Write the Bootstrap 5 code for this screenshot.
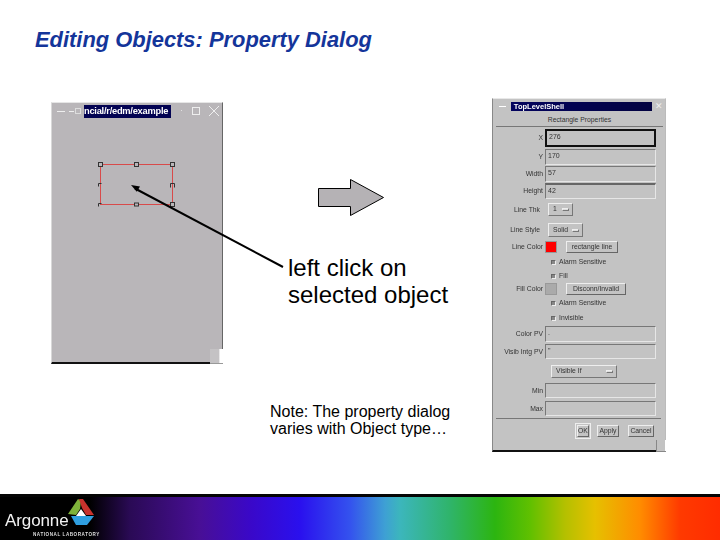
<!DOCTYPE html>
<html lang="en"><head><meta charset="utf-8"><title>Editing Objects</title>
<link href="https://cdn.jsdelivr.net/npm/bootstrap@5.3.0/dist/css/bootstrap.min.css" rel="stylesheet">
<style>
html,body{margin:0;background:#fff;overflow:hidden}
.slide-canvas{position:relative;width:720px;height:540px;font-family:"Liberation Sans",Arial,sans-serif;color:#000;overflow:hidden}
.slide-title{position:absolute;left:35px;top:27px;margin:0;font:italic bold 21.9px/25px "Liberation Sans",sans-serif;color:#14359a;white-space:nowrap}
.callout{position:absolute;left:288px;top:254px;font-size:24px;line-height:27px;white-space:nowrap}
.note-text{position:absolute;left:270px;top:403px;font-size:16px;line-height:17px;white-space:nowrap}
.shot-win{position:absolute;left:51px;top:102px;width:172px;height:262px;background:#b9b6b9;border-top:1px solid #e6e6e6;border-left:1px solid #d8d8d8;border-right:1px solid #666;border-bottom:2px solid #111;filter:blur(.2px)}
.shot-corner{position:absolute;right:-1px;bottom:-2px;width:13px;height:15px;background:linear-gradient(90deg,#c4c2c4 0,#c4c2c4 70%,#fff 75%);border-bottom:1px solid #999}
.shot-bar{height:16px;display:flex;align-items:center;padding-left:5px;color:#e8e8e8;font-size:9px}
.shot-dash{width:8px;border-top:1px solid #eee;margin-right:4px}
.shot-pin{width:6px;height:6px;border:1px solid #ddd;margin-right:3px}
.shot-name{background:#020252;color:#fff;font-size:9.3px;font-weight:bold;line-height:13px;flex:0 0 87px;white-space:nowrap;letter-spacing:-.25px}
.shot-btns{margin-left:auto;display:flex;align-items:center;gap:9px;padding-right:3px}
.shot-sq{width:8px;height:8px;border:1px solid #eee}
.overlay-svg{position:absolute;left:0;top:0;pointer-events:none}
.dlg{position:absolute;left:492px;top:98px;width:174px;height:354px;background:#c3c3c3;border:1px solid #e8e8e8;border-left-color:#888;border-right:1px solid #bbb;border-bottom:2px solid #111;font-size:6.8px;color:#333;display:flex;flex-direction:column;padding:2px 2px 0 3px}
.dlg *{font-family:"Liberation Sans",sans-serif}
.dlg-corner{position:absolute;right:-1px;bottom:-2px;width:10px;height:12px;background:linear-gradient(90deg,#c3c3c3 0,#c3c3c3 85%,#fff 90%);border-bottom:1px solid #888;border-left:1px solid #888}
.dlg-bar{height:10px;display:flex;align-items:center;gap:3px;flex:none}
.dlg-dash{width:7px;border-top:1px solid #fff;margin:0 2px 0 3px}
.dlg-name{width:144px;background:linear-gradient(90deg,#03035e,#020240);color:#fff;font-size:7.5px;line-height:9px;font-weight:bold;padding-left:3px;filter:blur(.3px)}
.dlg-x{color:#eee;font-size:9px;line-height:9px}
.dlg-head{height:14px;margin-top:2px;text-align:center;line-height:14px;border-bottom:1px solid #777;flex:none;font-size:6.8px}
.dlg-row{display:flex;align-items:center;flex:none;filter:blur(.4px)}
.dlg-lab{width:49px;text-align:right;padding-right:2px;white-space:nowrap;flex:none;line-height:8px}
.dlg-in{width:111px;height:100%;border:1px solid;border-color:#777 #e6e6e6 #e6e6e6 #777;padding:0 2px;line-height:11px;font-size:7px;display:block}
.dlg-in-focus{border:2px solid #111}
.dlg-in-top{border-top:2px solid #666}
.dlg-drop{display:flex;align-items:center;justify-content:space-between;height:100%;border:1px solid;border-color:#eee #777 #777 #eee;padding:0 3px 0 4px;margin-left:3px}
.dlg-knob{width:7px;height:3px;background:#ddd;border:1px solid;border-color:#eee #777 #777 #eee}
.dlg-swatch{width:12px;height:12px;flex:none;border:1px solid #999}
.dlg-pick{border:1px solid;border-color:#eee #666 #666 #eee;height:100%;margin-left:9px;line-height:9px;padding:0 2px;white-space:nowrap;text-align:center}
.dlg-chk{width:5px;height:5px;background:#888;border:1px solid;border-color:#666 #eee #eee #666;margin-left:55px;margin-right:3px;flex:none}
.dlg-sep{border-top:1px solid #777;flex:none;margin-top:2px;margin-right:2px}
.dlg-btn{border:1px solid;border-color:#eee #666 #666 #eee;height:12px;line-height:10px;text-align:center;filter:blur(.4px);flex:none}
.dlg-ok{outline:1px solid #eee;outline-offset:1px}
.foot-band{margin-top:auto;height:46px;border-top:3px solid #050505;background:linear-gradient(90deg,#000 0,#000 90px,#2a0a55 130px,#480f96 200px,#3a08c8 250px,#2a10ee 300px,#3452ee 350px,#3ea0d4 385px,#3cb6bc 400px,#2fb46a 450px,#2cb510 495px,#60c000 530px,#b4c000 565px,#e6c000 595px,#ff8c00 640px,#ff3a00 680px,#ff2c00 720px);position:relative}
.logo-word{position:absolute;left:5px;top:14px;font-size:17px;line-height:20px;color:#f2f2f2;letter-spacing:-.1px;filter:blur(.25px)}
.logo-sub{position:absolute;left:33px;top:35px;font-size:4.6px;line-height:6px;color:#ddd;font-weight:bold;letter-spacing:.55px;white-space:nowrap;filter:blur(.25px)}
.logo-mark{position:absolute;left:67px;top:2px;filter:blur(.25px)}
</style></head><body>
<div class="slide-canvas d-flex flex-column">
<h1 class="slide-title">Editing Objects: Property Dialog</h1>

<div class="shot-win">
  <div class="shot-bar"><span class="shot-dash"></span><span class="shot-dash" style="width:5px;margin-right:1px"></span><span class="shot-pin"></span><span class="shot-name">ncial/r/edm/example</span>
  <div class="shot-btns"><span>·</span><span class="shot-sq"></span><svg width="10" height="10" viewBox="0 0 10 10"><path d="M0 0L10 10M10 0L0 10" stroke="#eee"/></svg></div></div>
  <div class="shot-corner"></div>
</div>

<svg class="overlay-svg" width="720" height="540" viewBox="0 0 720 540">
  <g fill="none" stroke="#d84a4a" stroke-width="1"><rect x="100.5" y="164.5" width="72" height="40"/></g>
  <g fill="#b9b6b9" stroke="#333" stroke-width="1">
    <rect x="98.5" y="162.5" width="4" height="4"/><rect x="134.5" y="162.5" width="4" height="4"/><rect x="170.5" y="162.5" width="4" height="4"/>
    <path d="M98.5 186.5v-3h3" fill="none"/><path d="M170.5 187.5v-4h4v4" fill="none"/>
    <path d="M98.5 206.5v-3h3" fill="none"/><rect x="134.5" y="203" width="4" height="3"/><rect x="170.5" y="202.5" width="4" height="4"/>
  </g>
  <path d="M131 185l9 1.4-3.2 5.4z" fill="#000"/>
  <path d="M135 188.500L283 267" stroke="#000" stroke-width="2" fill="none"/>
  <path d="M318.500 188.500h32v-9l33 18-33 18v-9h-32z" fill="#b5b2b5" stroke="#000" stroke-width="1"/>
</svg>

<div class="callout">left click on<br>selected object</div>
<div class="note-text">Note: The property dialog<br>varies with Object type…</div>

<div class="dlg">
  <div class="dlg-bar"><span class="dlg-dash"></span><span class="dlg-name">TopLevelShell</span><span class="dlg-x">✕</span></div>
  <div class="dlg-head">Rectangle Properties</div>
  <div class="dlg-row" style="height:18px;margin-top:2px"><span class="dlg-lab">X</span><span class="dlg-in dlg-in-focus">276</span></div>
  <div class="dlg-row" style="height:16px;margin-top:2px"><span class="dlg-lab">Y</span><span class="dlg-in">170</span></div>
  <div class="dlg-row" style="height:16px;margin-top:1px"><span class="dlg-lab">Width</span><span class="dlg-in">57</span></div>
  <div class="dlg-row" style="height:16px;margin-top:1px"><span class="dlg-lab">Height</span><span class="dlg-in dlg-in-top">42</span></div>
  <div class="dlg-row" style="height:13px;margin-top:4px"><span class="dlg-lab" style="width:46px">Line Thk</span><span class="dlg-drop" style="width:25px;margin-left:6px">1<span class="dlg-knob"></span></span></div>
  <div class="dlg-row" style="height:14px;margin-top:7px"><span class="dlg-lab" style="width:46px">Line Style</span><span class="dlg-drop" style="width:35px;margin-left:6px">Solid<span class="dlg-knob"></span></span></div>
  <div class="dlg-row" style="height:12px;margin-top:4px"><span class="dlg-lab">Line Color</span><span class="dlg-swatch" style="background:#f00"></span><span class="dlg-pick" style="width:52px">rectangle line</span></div>
  <div class="dlg-row" style="height:8px;margin-top:5px"><span class="dlg-chk"></span>Alarm Sensitive</div>
  <div class="dlg-row" style="height:8px;margin-top:6px"><span class="dlg-chk"></span>Fill</div>
  <div class="dlg-row" style="height:12px;margin-top:3px"><span class="dlg-lab">Fill Color</span><span class="dlg-swatch" style="background:#aaa"></span><span class="dlg-pick" style="width:60px">Disconn/Invalid</span></div>
  <div class="dlg-row" style="height:8px;margin-top:4px"><span class="dlg-chk"></span>Alarm Sensitive</div>
  <div class="dlg-row" style="height:8px;margin-top:7px"><span class="dlg-chk"></span>Invisible</div>
  <div class="dlg-row" style="height:16px;margin-top:4px"><span class="dlg-lab">Color PV</span><span class="dlg-in">.</span></div>
  <div class="dlg-row" style="height:15px;margin-top:2px"><span class="dlg-lab">Visib Intg PV</span><span class="dlg-in">"</span></div>
  <div class="dlg-row" style="height:13px;margin-top:6px"><span class="dlg-drop" style="width:66px;margin-left:55px">Visible If<span class="dlg-knob"></span></span></div>
  <div class="dlg-row" style="height:15px;margin-top:5px"><span class="dlg-lab">Min</span><span class="dlg-in"></span></div>
  <div class="dlg-row" style="height:15px;margin-top:3px"><span class="dlg-lab">Max</span><span class="dlg-in"></span></div>
  <div class="dlg-sep"></div>
  <div class="d-flex" style="margin-top:6px">
    <span class="dlg-btn dlg-ok" style="width:12px;margin-left:81px">OK</span>
    <span class="dlg-btn" style="width:22px;margin-left:8px">Apply</span>
    <span class="dlg-btn" style="width:26px;margin-left:9px">Cancel</span>
  </div>
  <div class="dlg-corner"></div>
</div>

<div class="foot-band">
  <span class="logo-word">Argonne</span>
  <span class="logo-sub">NATIONAL LABORATORY</span>
  <svg class="logo-mark" width="30" height="28" viewBox="0 0 30 28">
    <path d="M11 0L1 15l8 1 4-6 1-8z" fill="#7fb23a"/>
    <path d="M12 0h4l11 16-8 0-4-7z" fill="#c8322d"/>
    <path d="M4 17h23l-7 9H9z" fill="#2f9fe0"/>
    <path d="M14 10l5 7H9z" fill="#fff"/>
  </svg>
</div>
</div>
<script src="https://cdn.jsdelivr.net/npm/bootstrap@5.3.0/dist/js/bootstrap.bundle.min.js"></script>
</body></html>
